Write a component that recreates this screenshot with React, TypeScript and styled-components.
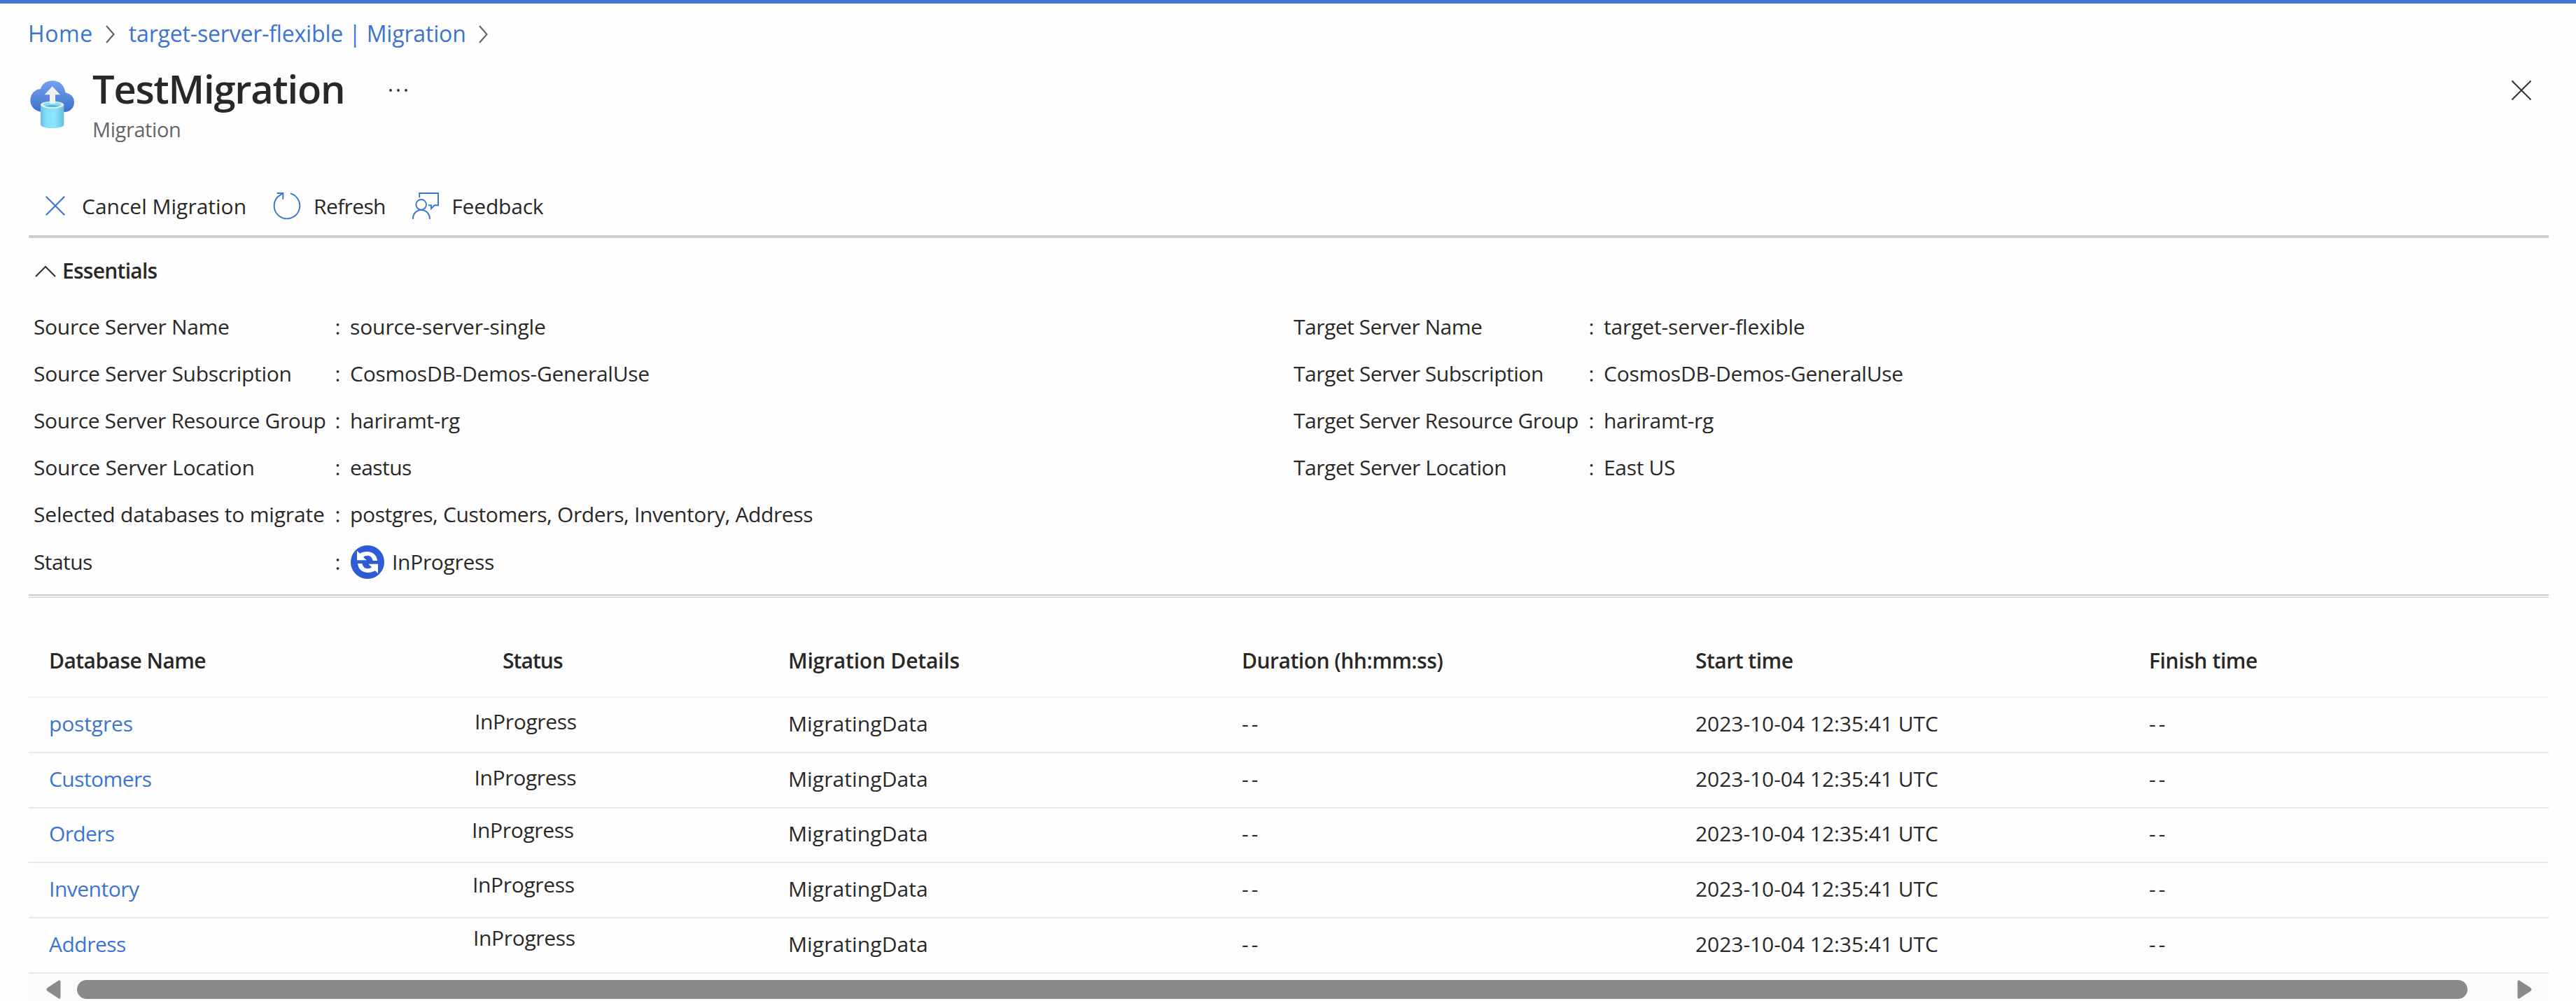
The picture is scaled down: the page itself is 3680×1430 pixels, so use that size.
import React from "react";
import styled, { createGlobalStyle } from "styled-components";

const LINK = "#3b74d3";
const INK = "#292827";

const GlobalStyle = createGlobalStyle`
  * { box-sizing: border-box; }
  body {
    margin: 0;
    background: #fefefe;
    color: ${INK};
    font-family: "Open Sans", "Noto Sans", sans-serif;
    font-size: 30px;
    overflow: hidden;
  }
  svg { display: block; flex: none; }
`;

const Text = styled.span<{ $ls?: number }>`
  white-space: pre;
  letter-spacing: ${(p) => p.$ls ?? -0.3}px;
`;

const Page = styled.div`
  display: flex;
  flex-direction: column;
  height: 1430px;
  border-top: 5px solid #3e76d0;
`;

const Breadcrumb = styled.nav`
  display: flex;
  align-items: center;
  height: 85px;
  padding-left: 40px;
  color: ${LINK};
  font-size: 32px;
`;

const Crumb = styled(Text)`
  cursor: pointer;
`;

const Separator = styled.svg`
  margin: 2px 20px 0 18px;
`;

const Header = styled.header`
  display: flex;
  align-items: flex-start;
  height: 162px;
  padding: 0 63px 0 42px;
`;

const ResourceIcon = styled.svg`
  margin-top: 23px;
`;

const Titles = styled.div`
  display: flex;
  flex-direction: column;
  margin-left: 24px;
`;

const Title = styled.h1`
  margin: 0;
  height: 73px;
  line-height: 73px;
  font-size: 56px;
  font-weight: 600;
`;

const Subtitle = styled.div`
  height: 43px;
  line-height: 43px;
  font-size: 29px;
  color: #666;
`;

const MoreIcon = styled.svg`
  margin: 36px 0 0 63px;
`;

const CloseIcon = styled.svg`
  margin: 24px 0 0 auto;
`;

const Toolbar = styled.div`
  display: flex;
  align-items: center;
  gap: 37.5px;
  height: 88px;
  margin: 0 39px 0 41px;
  padding-left: 24px;
  border-bottom: 4px solid #cfcfcf;
`;

const ToolButton = styled.div<{ $gap: number }>`
  display: flex;
  align-items: center;
  gap: ${(p) => p.$gap}px;
`;

const EssentialsToggle = styled.div`
  display: flex;
  align-items: center;
  gap: 9px;
  height: 93px;
  padding-left: 50px;
  font-weight: 600;
`;

const FieldsFrame = styled.div`
  height: 421px;
  margin: 0 39px 0 41px;
  border-bottom: 1px solid #ccc;
  background: #f3f3f3;
`;

const FieldsBody = styled.div`
  display: flex;
  height: 418px;
  border-bottom: 2px solid #cbcbcb;
  background: #fefefe;
`;

const FieldSide = styled.div<{ $left: number; $width: number }>`
  width: ${(p) => p.$width}px;
  padding-left: ${(p) => p.$left}px;
`;

const Field = styled.div<{ $label: number; $tall?: boolean }>`
  display: grid;
  grid-template-columns: ${(p) => p.$label}px 21.5px 1fr;
  align-items: center;
  height: ${(p) => (p.$tall ? 69 : 67)}px;
`;

const StatusValue = styled.div`
  display: flex;
  align-items: center;
  gap: 11px;
  padding-left: 1px;
`;

const Table = styled.div`
  display: flex;
  flex-direction: column;
  margin: 0 39px 0 41px;
`;

const Row = styled.div`
  display: grid;
  grid-template-columns: 604px 452px 648px 648px 648px 1fr;
  align-items: center;
  height: 78.8px;
  padding: 0 0 4px 29px;
  border-bottom: 2px solid #e9e9e9;
`;

const HeadRow = styled(Row)`
  height: 143px;
  padding-top: 37px;
  padding-bottom: 0;
  border-bottom-color: #f2f2f2;
  font-weight: 600;
`;

const NameLink = styled(Text)`
  color: ${LINK};
  cursor: pointer;
`;

const StatusCell = styled.div<{ $indent: number; $lift?: number }>`
  padding-left: ${(p) => p.$indent}px;
  padding-bottom: ${(p) => (p.$lift ?? 0) * 2}px;
`;

const ScrollTrack = styled.div`
  display: flex;
  align-items: flex-start;
  flex: 1;
  margin: 0 39px 0 41px;
  padding: 9px 24px 0 25px;
  background: #fbfbfb;
`;

const ScrollThumb = styled.div`
  flex: 1;
  height: 27px;
  margin: 0 71px 0 23px;
  border-radius: 13.5px;
  background: #8a8a8a;
`;

const Chevron = () => (
  <Separator width="13" height="26" viewBox="0 0 13 26" fill="none" stroke="#605e5c" strokeWidth="2">
    <path d="M1 1L11.5 13L1 25" />
  </Separator>
);

const CloudUpload = () => (
  <ResourceIcon width="66" height="71" viewBox="36 68 198 213">
    <defs>
      <linearGradient id="cloud" x1="0" y1="75" x2="0" y2="210" gradientUnits="userSpaceOnUse">
        <stop offset="0" stopColor="#76a2ee" />
        <stop offset="1" stopColor="#3a70cd" />
      </linearGradient>
      <linearGradient id="cylinder" x1="84" y1="0" x2="184" y2="0" gradientUnits="userSpaceOnUse">
        <stop offset="0" stopColor="#68bfe0" />
        <stop offset="0.25" stopColor="#85dff8" />
        <stop offset="0.6" stopColor="#8ae6ff" />
        <stop offset="1" stopColor="#68bcdc" />
      </linearGradient>
    </defs>
    <path
      d="M88 209C60 205 40 186 40 159C40 133 58 112 84 110C90 88 110 75 136 75C164 75 186 94 190 126C212 130 228 145 228 168C228 192 210 209 186 209Z"
      fill="url(#cloud)"
    />
    <path d="M84 178V264C84 272 106 279 134 279S184 272 184 264V178Z" fill="url(#cylinder)" />
    <ellipse cx="134" cy="178" rx="50" ry="15.5" fill="#e9e9ea" />
    <ellipse cx="134" cy="177" rx="39" ry="10" fill="#7fe0f8" />
    <path d="M104 184C113 178 155 178 164 184C153 188 115 188 104 184Z" fill="#42b4cf" />
    <path d="M134 99L168 135H147V174H123V135H101Z" fill="#f1f1f2" />
  </ResourceIcon>
);

const CancelIcon = () => (
  <svg width="28" height="28" viewBox="0 0 28 28" fill="none" stroke={LINK} strokeWidth="2.1">
    <path d="M0.8 0.8L27.2 27.2M27.2 0.8L0.8 27.2" />
  </svg>
);

const RefreshIcon = () => (
  <svg width="40" height="40" viewBox="29 39 120 120" fill="none" stroke={LINK} strokeWidth="5.8">
    <path d="M104 46A55 55 0 1 1 50 60L70 46" />
    <path d="M46 45H72V71" />
  </svg>
);

const FeedbackIcon = () => (
  <svg width="40" height="40" viewBox="624 39 120 120" fill="none" stroke={LINK} strokeWidth="5.8">
    <path d="M657.500 64V45H738V97H722L708 111V97H696" />
    <circle cx="665" cy="94" r="22" />
    <path d="M629.500 156C629.500 132 645 117 665 117S702 132 702 156" />
  </svg>
);

const SyncIcon = () => (
  <svg width="48" height="48" viewBox="63 60 144 144">
    <circle cx="135" cy="132" r="72" fill="#2f5bd5" />
    <g id="sync-half" fill="#fff">
      <path d="M90 83L102 95C111 90 122 87 133 87C157 87 175 102 177 126H158C155 112 147 104 134 104C128 104 122 106 117 110L131 124H90Z" />
    </g>
    <use href="#sync-half" transform="rotate(180 135 132)" />
  </svg>
);

type Entry = [string, number, string, number];

const source: Entry[] = [
  ["Source Server Name", -0.33, "source-server-single", -0.11],
  ["Source Server Subscription", -0.3, "CosmosDB-Demos-GeneralUse", -0.24],
  ["Source Server Resource Group", -0.37, "hariramt-rg", -0.32],
  ["Source Server Location", -0.25, "eastus", -0.58],
  ["Selected databases to migrate", -0.19, "postgres, Customers, Orders, Inventory, Address", -0.37],
];

const target: Entry[] = [
  ["Target Server Name", -0.5, "target-server-flexible", -0.15],
  ["Target Server Subscription", -0.48, "CosmosDB-Demos-GeneralUse", -0.24],
  ["Target Server Resource Group", -0.5, "hariramt-rg", -0.32],
  ["Target Server Location", -0.45, "East US", -0.33],
];

const databases = [
  { name: "postgres", ls: -0.15, indent: 4, lift: 3 },
  { name: "Customers", ls: -0.55, indent: 3.5, lift: 2 },
  { name: "Orders", ls: -0.65, indent: 0, lift: 5 },
  { name: "Inventory", ls: -0.5, indent: 1, lift: 6 },
  { name: "Address", ls: -0.51, indent: 2, lift: 9 },
];

const FieldList = ({ entries, label }: { entries: Entry[]; label: number }) => (
  <>
    {entries.map(([name, nameLs, value, valueLs]) => (
      <Field key={name} $label={label}>
        <Text $ls={nameLs}>{name}</Text>
        <Text>:</Text>
        <Text $ls={valueLs}>{value}</Text>
      </Field>
    ))}
  </>
);

export default function App() {
  return (
    <>
      <GlobalStyle />
      <Page>
        <Breadcrumb>
          <Crumb $ls={0.6}>Home</Crumb>
          <Chevron />
          <Crumb $ls={-0.18}>target-server-flexible | Migration</Crumb>
          <Chevron />
        </Breadcrumb>

        <Header>
          <CloudUpload />
          <Titles>
            <Title>
              <Text $ls={-1.18}>TestMigration</Text>
            </Title>
            <Subtitle>
              <Text $ls={-0.4}>Migration</Text>
            </Subtitle>
          </Titles>
          <MoreIcon width="28" height="6" viewBox="0 0 28 6" fill="#323130">
            <circle cx="3" cy="3" r="1.9" />
            <circle cx="14" cy="3" r="1.9" />
            <circle cx="25" cy="3" r="1.9" />
          </MoreIcon>
          <CloseIcon width="30" height="30" viewBox="0 0 30 30" fill="none" stroke="#323130" strokeWidth="2">
            <path d="M1.500 1.500L28.500 28.500M28.500 1.500L1.500 28.500" />
          </CloseIcon>
        </Header>

        <Toolbar>
          <ToolButton $gap={24}>
            <CancelIcon />
            <Text $ls={0}>Cancel Migration</Text>
          </ToolButton>
          <ToolButton $gap={18.5}>
            <RefreshIcon />
            <Text $ls={-0.64}>Refresh</Text>
          </ToolButton>
          <ToolButton $gap={17}>
            <FeedbackIcon />
            <Text $ls={-0.2}>Feedback</Text>
          </ToolButton>
        </Toolbar>

        <EssentialsToggle>
          <svg width="30" height="18" viewBox="0 0 30 18" fill="none" stroke="#323130" strokeWidth="2">
            <path d="M1 17L15 3L29 17" />
          </svg>
          <Text $ls={-0.75}>Essentials</Text>
        </EssentialsToggle>

        <FieldsFrame>
          <FieldsBody>
            <FieldSide $left={7} $width={1807}>
              <FieldList entries={source} label={430.5} />
              <Field $label={430.5} $tall>
                <Text $ls={-0.58}>Status</Text>
                <Text>:</Text>
                <StatusValue>
                  <SyncIcon />
                  <Text $ls={-0.31}>InProgress</Text>
                </StatusValue>
              </Field>
            </FieldSide>
            <FieldSide $left={0} $width={1793}>
              <FieldList entries={target} label={421.5} />
            </FieldSide>
          </FieldsBody>
        </FieldsFrame>

        <Table>
          <HeadRow>
            <Text $ls={-0.55}>Database Name</Text>
            <StatusCell $indent={44}>
              <Text $ls={-0.94}>Status</Text>
            </StatusCell>
            <Text $ls={-0.2}>Migration Details</Text>
            <Text $ls={-0.5}>Duration (hh:mm:ss)</Text>
            <Text $ls={-0.5}>Start time</Text>
            <Text $ls={-0.4}>Finish time</Text>
          </HeadRow>
          {databases.map((db) => (
            <Row key={db.name}>
              <NameLink $ls={db.ls}>{db.name}</NameLink>
              <StatusCell $indent={db.indent} $lift={db.lift}>
                <Text $ls={-0.35}>InProgress</Text>
              </StatusCell>
              <Text $ls={0.1}>MigratingData</Text>
              <Text $ls={4}>--</Text>
              <Text $ls={-0.05}>2023-10-04 12:35:41 UTC</Text>
              <Text $ls={4}>--</Text>
            </Row>
          ))}
        </Table>

        <ScrollTrack>
          <svg width="21" height="27" viewBox="0 0 21 27" fill="#8a8a8a">
            <path d="M18 0.500Q20.500 -0.500 20.500 3V24Q20.500 27.500 18 26.500L2 16Q-1 13.500 2 11Z" />
          </svg>
          <ScrollThumb />
          <svg width="21" height="27" viewBox="0 0 21 27" fill="#8a8a8a">
            <path d="M3 0.500Q0.500 -0.500 0.500 3V24Q0.500 27.500 3 26.500L19 16Q22 13.500 19 11Z" />
          </svg>
        </ScrollTrack>
      </Page>
    </>
  );
}
